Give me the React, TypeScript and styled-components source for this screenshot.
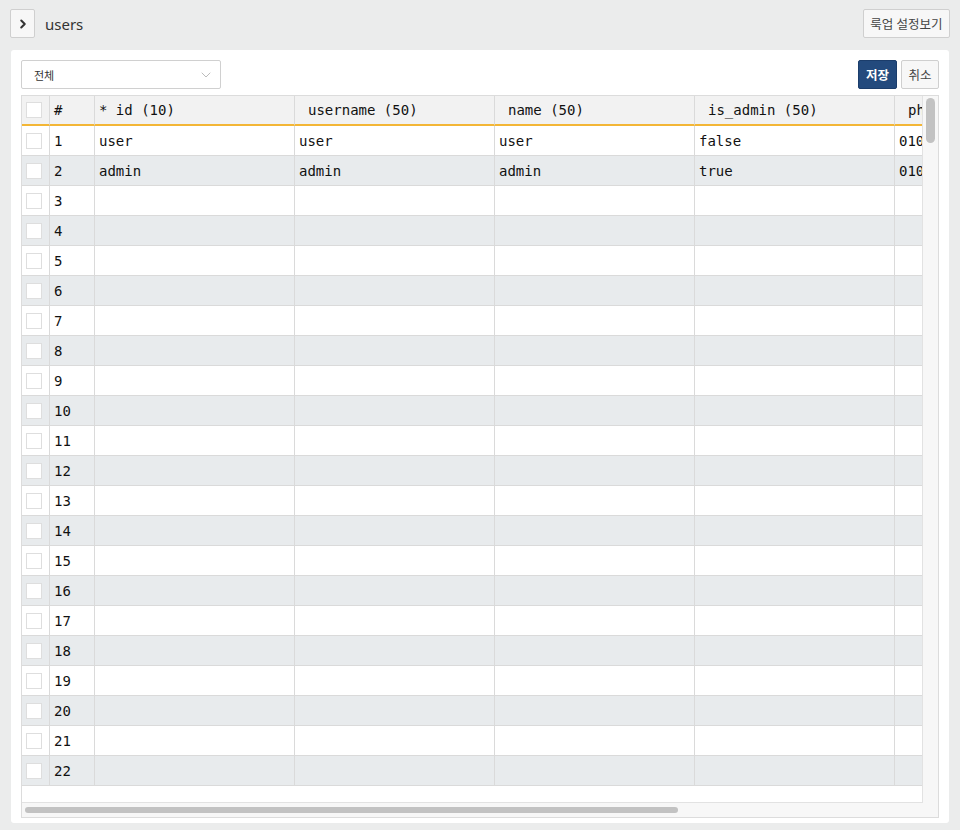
import { createGlobalStyle } from 'styled-components';
import styled from 'styled-components';
import { Fragment } from 'react';
import { ChevronRight, ChevronDown } from 'lucide-react';

const GlobalStyle = createGlobalStyle`
  body {
    margin: 0;
    background: #ebecec;
    font-family: "Noto Sans", "Noto Sans CJK KR", sans-serif;
    color: #333;
  }
`;

const Page = styled.div`
  width: 960px;
  height: 830px;
  box-sizing: border-box;
  padding: 9px 10px 0 10px;
  display: flex;
  flex-direction: column;
`;

const TopBar = styled.div`
  display: flex;
  align-items: center;
  height: 29px;
  margin-bottom: 12px;
`;

const ToggleButton = styled.button`
  width: 25px;
  height: 29px;
  padding: 0;
  box-sizing: border-box;
  border: 1px solid #cfcfcf;
  border-radius: 2px;
  background: #f7f7f7;
  color: #333;
  display: flex;
  align-items: center;
  justify-content: center;
`;

const Title = styled.span`
  margin-left: 10px;
  font-size: 15px;
  color: #333;
  flex: 1;
`;

const Button = styled.button<{ $primary?: boolean; $width?: number }>`
  height: 29px;
  ${(p) => (p.$width ? `width: ${p.$width}px;` : '')}
  box-sizing: border-box;
  padding: 0;
  white-space: nowrap;
  border-radius: 2px;
  font-family: "Noto Sans", "Noto Sans CJK KR", sans-serif;
  font-size: 12.5px;
  font-weight: ${(p) => (p.$primary ? 700 : 400)};
  border: 1px solid ${(p) => (p.$primary ? '#1b3d6b' : '#cfcfcf')};
  background: ${(p) => (p.$primary ? '#234a7d' : '#f7f7f7')};
  color: ${(p) => (p.$primary ? '#fff' : '#444')};
`;

const Panel = styled.div`
  margin: 0 1px;
  background: #fff;
  border-radius: 3px;
  padding: 10px 10px 5px 10px;
  height: 773px;
  box-sizing: border-box;
  display: flex;
  flex-direction: column;
`;

const Toolbar = styled.div`
  display: flex;
  align-items: center;
  gap: 4px;
  height: 29px;
  margin-bottom: 6px;
`;

const Select = styled.div`
  width: 200px;
  height: 29px;
  box-sizing: border-box;
  border: 1px solid #d0d0d0;
  border-radius: 2px;
  display: flex;
  align-items: center;
  justify-content: space-between;
  padding: 0 6px 0 12px;
  font-size: 11px;
  color: #333;
  margin-right: auto;
`;

const GridFrame = styled.div`
  flex: 1;
  border: 1px solid #dcdcdc;
  display: flex;
  flex-direction: column;
  min-height: 0;
`;

const GridBody = styled.div`
  flex: 1;
  display: flex;
  min-height: 0;
`;

const Viewport = styled.div`
  flex: 1;
  overflow: hidden;
  border-right: 1px solid #e2e2e2;
  border-bottom: 1px solid #e2e2e2;
`;

const VTrack = styled.div`
  width: 15px;
  background: #f7f7f7;
  padding: 2px 3px;
  box-sizing: border-box;
`;

const VThumb = styled.div`
  width: 9px;
  height: 45px;
  border-radius: 5px;
  background: #c2c2c2;
`;

const HTrack = styled.div`
  height: 14px;
  background: #f7f7f7;
  padding: 4px 3px;
  box-sizing: border-box;
`;

const HThumb = styled.div`
  width: 653px;
  height: 6px;
  border-radius: 3px;
  background: #c2c2c2;
`;

const Table = styled.div`
  display: grid;
  grid-template-columns: 28px 45px repeat(5, 200px);
  width: max-content;
  font-family: "DejaVu Sans Mono", monospace;
  font-size: 14px;
  color: #111;
`;

const HeadCell = styled.div<{ $indent?: boolean }>`
  height: 28px;
  box-sizing: content-box;
  background: #f2f2f2;
  border-right: 1px solid #dadada;
  border-bottom: 2px solid #f3b636;
  display: flex;
  align-items: center;
  padding-left: ${(p) => (p.$indent ? '13px' : '4px')};
  white-space: pre;
  overflow: hidden;
`;

const Cell = styled.div<{ $alt?: boolean }>`
  height: 29px;
  background: ${(p) => (p.$alt ? '#e8ebed' : '#fff')};
  border-right: 1px solid #dadada;
  border-bottom: 1px solid #dadada;
  display: flex;
  align-items: center;
  padding-left: 4px;
  white-space: pre;
  overflow: hidden;
`;

const Check = styled.span`
  width: 16px;
  height: 16px;
  border: 1px solid #dedede;
  background: #fff;
  box-sizing: border-box;
`;

const columns = [
  { label: '* id (10)', indent: false },
  { label: 'username (50)', indent: true },
  { label: 'name (50)', indent: true },
  { label: 'is_admin (50)', indent: true },
  { label: 'phone (20)', indent: true },
];

const data: string[][] = [
  ['user', 'user', 'user', 'false', '010-1111-2222'],
  ['admin', 'admin', 'admin', 'true', '010-3333-4444'],
];

const rowCount = 22;

export default function App() {
  const rows = Array.from({ length: rowCount }, (_, i) => data[i] || ['', '', '', '', '']);
  return (
    <>
      <GlobalStyle />
      <Page>
        <TopBar>
          <ToggleButton>
            <ChevronRight size={14} strokeWidth={3.5} />
          </ToggleButton>
          <Title>users</Title>
          <Button $width={87}>룩업 설정보기</Button>
        </TopBar>
        <Panel>
          <Toolbar>
            <Select>
              전체
              <ChevronDown size={16} strokeWidth={1} color="#9a9a9a" />
            </Select>
            <Button $primary $width={39}>저장</Button>
            <Button $width={38}>취소</Button>
          </Toolbar>
          <GridFrame>
            <GridBody>
              <Viewport>
                <Table>
                  <HeadCell>
                    <Check />
                  </HeadCell>
                  <HeadCell>#</HeadCell>
                  {columns.map((c) => (
                    <HeadCell key={c.label} $indent={c.indent}>
                      {c.label}
                    </HeadCell>
                  ))}
                  {rows.map((r, i) => (
                    <Fragment key={i}>
                      <Cell $alt={i % 2 === 1}>
                        <Check />
                      </Cell>
                      <Cell $alt={i % 2 === 1}>{i + 1}</Cell>
                      {r.map((v, j) => (
                        <Cell key={j} $alt={i % 2 === 1}>
                          {v}
                        </Cell>
                      ))}
                    </Fragment>
                  ))}
                </Table>
              </Viewport>
              <VTrack>
                <VThumb />
              </VTrack>
            </GridBody>
            <HTrack>
              <HThumb />
            </HTrack>
          </GridFrame>
        </Panel>
      </Page>
    </>
  );
}
